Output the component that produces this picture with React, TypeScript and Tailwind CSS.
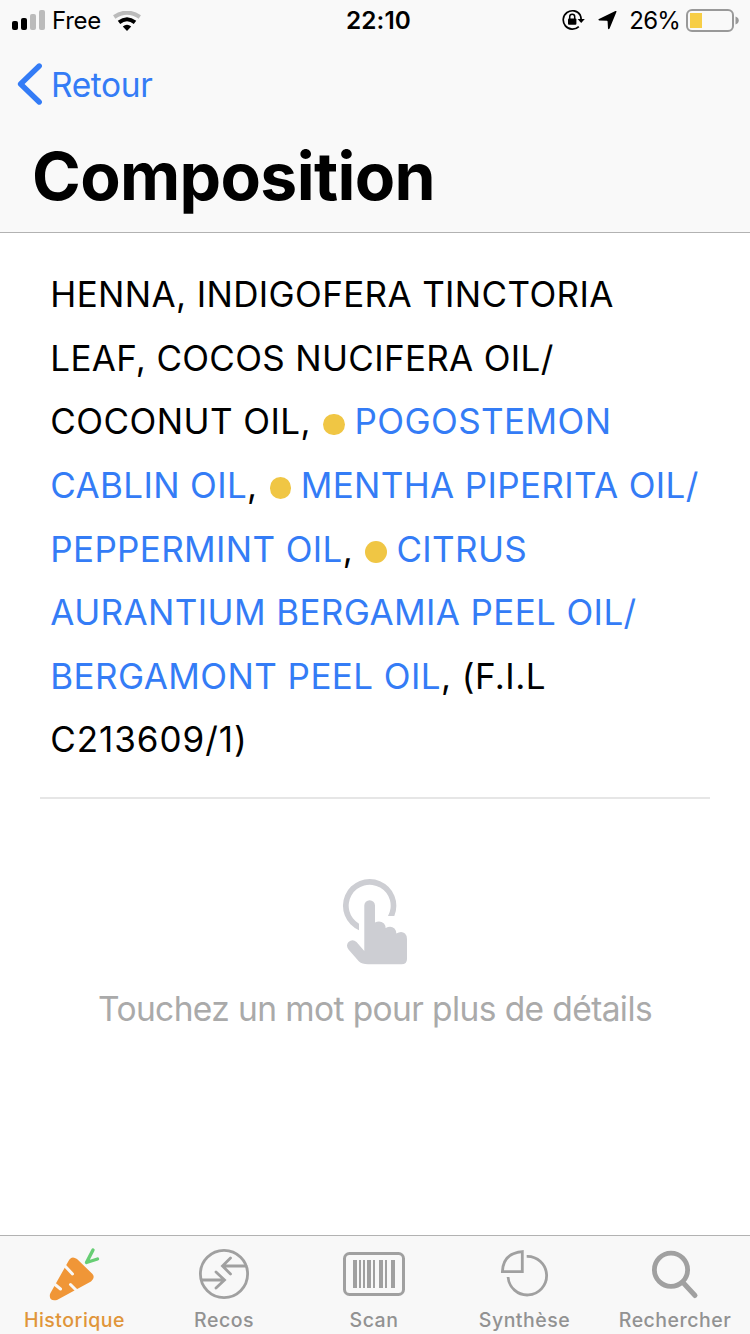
import type { ReactNode } from 'react'

const Dot = () => {
    return <span className="inline-block w-[21.5px] h-[21.5px] rounded-full bg-[#f0c644] align-[-1px] ml-[2px] mr-[9.5px]"></span>
}

const Word = ({ children }: { children: ReactNode }) => {
    return <a href="#" className="text-[#347cf6]">{children}</a>
}

const StatusBar = () => {
    return (
        <div className="flex items-center h-10 pl-3 pr-[11px] text-[24px]">
            <div className="flex flex-1 items-center">
                <svg width="33" height="20" viewBox="0 0 33 20">
                    <rect x="0" y="11" width="6" height="9" rx="2" fill="#000" />
                    <rect x="9" y="8" width="6" height="12" rx="2" fill="#000" />
                    <rect x="18" y="4" width="6" height="16" rx="2" fill="#bbb" />
                    <rect x="27" y="0" width="6" height="20" rx="2" fill="#bbb" />
                </svg>
                <span className="ml-[7px] pt-0.5 tracking-[-0.3px]">Free</span>
                <svg className="ml-3 mt-px" width="28" height="20" viewBox="0 0 28 20" fill="none">
                    <path d="M1.2 6 Q14 -2.8 26.8 6" stroke="#bbb" strokeWidth="4" />
                    <path d="M6 11.4 Q14 5.2 22 11.4" stroke="#000" strokeWidth="4" />
                    <path d="M9.8 15.6 Q14 12 18.2 15.6 L14 20Z" fill="#000" />
                </svg>
            </div>
            <span className="ml-[6px] pt-px font-semibold tracking-[0.1px] text-[24.3px]">22:10</span>
            <div className="flex flex-1 items-center justify-end">
                <svg width="23" height="22" viewBox="0 0 23 22" fill="none">
                    <path d="M18.2 6 A9.2 9.2 0 1 0 16.8 17.6" stroke="#000" strokeWidth="1.7" />
                    <path d="M18 5.6 Q19.2 8 19.2 11" stroke="#000" strokeWidth="1.7" />
                    <path d="M15.6 10 H22.8 L19.2 14Z" fill="#000" />
                    <rect x="6" y="9.4" width="8.4" height="6.4" rx="1" fill="#000" />
                    <path d="M7.7 10 V7.8 A2.5 2.5 0 0 1 12.7 7.8 V10" stroke="#000" strokeWidth="1.5" />
                </svg>
                <svg className="ml-[13px]" width="19" height="20" viewBox="0 0 19 20">
                    <path d="M17.4 1.1 Q19 0.6 18.4 2.1 L11.6 18.4 Q10.5 20 10 18.4 L9.6 11.4 Q9.5 10.7 8.9 10.7 L1.2 10.4 Q-0.5 10 1 8.9Z" fill="#000" />
                </svg>
                <span className="ml-[12px] pt-0.5 tracking-[-0.8px]">26%</span>
                <svg className="ml-[6px] mt-px" width="53" height="23" viewBox="0 0 53 23">
                    <rect x="1" y="1" width="46" height="21" rx="5" fill="none" stroke="#999" strokeWidth="2" />
                    <rect x="4" y="4" width="12" height="15" fill="#f7ce46" />
                    <path d="M49.5 7.5 Q52.8 8.7 52.8 11.5 Q52.8 14.3 49.5 15.5Z" fill="#999" />
                </svg>
            </div>
        </div>
    )
}

const Header = () => {
    return (
        <header className="h-[233px] shrink-0 bg-[#f9f9f9] border-b border-[#b2b2b2]">
            <StatusBar />
            <a href="#" className="flex items-center h-[88px] pl-[17px] text-[#347cf6]">
                <svg width="26" height="42" viewBox="0 0 26 42" fill="none" stroke="currentColor" strokeWidth="5.4" strokeLinecap="round" strokeLinejoin="round">
                    <path d="M22.2 3 L3.6 21 L22.2 39" />
                </svg>
                <span className="ml-2 pt-0.5 text-[33.5px] tracking-[-0.4px]">Retour</span>
            </a>
            <h1 className="pl-8 text-[66px] leading-[96px] font-bold tracking-[-0.65px]">Composition</h1>
        </header>
    )
}

const Ingredients = () => {
    return (
        <section className="mx-10 pl-[10.3px] pt-[30.2px] h-[566px] border-b-2 border-[#e6e6e6] text-[35px] leading-[63.6px] whitespace-nowrap">
            <p className="tracking-[0.36px]">HENNA, INDIGOFERA TINCTORIA</p>
            <p className="tracking-[0.32px]">LEAF, COCOS NUCIFERA OIL/</p>
            <p className="tracking-[0.44px]">COCONUT OIL, <Dot /><Word>POGOSTEMON</Word></p>
            <p className="tracking-[0.35px]"><Word>CABLIN OIL</Word>, <Dot /><Word>MENTHA PIPERITA OIL/</Word></p>
            <p className="tracking-[0.36px]"><Word>PEPPERMINT OIL</Word>, <Dot /><Word>CITRUS</Word></p>
            <p className="tracking-[0.38px]"><Word>AURANTIUM BERGAMIA PEEL OIL/</Word></p>
            <p className="tracking-[0.42px]"><Word>BERGAMONT PEEL OIL</Word>, (F.I.L</p>
            <p className="tracking-[0.95px]">C213609/1)</p>
        </section>
    )
}

const Hint = () => {
    return (
        <div className="flex flex-col flex-1 items-center pt-20">
            <svg width="66" height="86" viewBox="0 0 66 86" fill="#cdced3">
                <path d="M17 51.2 A26.7 26.7 0 1 1 52.3 37 H46 A21 21 0 1 0 17 44.8Z" />
                <path d="M22.3 72 V26.5 A5.3 5.3 0 0 1 33 26.5 V43.5 Q38 41 42 44.5 Q43.6 46.5 43.6 49 Q49 46.5 52.5 49.5 Q54.3 51.5 54.3 54.5 Q59.5 51.5 63 54.5 Q65 56.5 65 60 V80 Q65 85.3 59.5 85.3 H26 Q20 85.3 17 82.5 L6.5 70.5 Q3.5 66.5 6.5 63 Q10.5 59.5 14.5 63Z" />
            </svg>
            <p className="mt-[24px] text-[33.5px] leading-[40px] text-[#aaa] whitespace-nowrap tracking-[-0.6px]">Touchez un mot pour plus de détails</p>
        </div>
    )
}

const TabBar = () => {
    return (
        <nav className="h-[99px] shrink-0 grid grid-cols-[149px_150px_150px_151px_150px] bg-[#f8f8f8] border-t border-[#b2b2b2] text-[#929292] text-[19.5px] font-medium leading-6 tracking-[0.5px]">
            <a href="#" className="flex flex-col items-center text-[#e0953a]">
                <svg className="mt-[11px] mb-[7px]" width="52" height="54" viewBox="0 0 52 54">
                    <path d="M19.5 14 Q22.5 8 28 12 L43.5 27 Q46.5 31 42 34.5 L8 53 Q1 54.5 0.8 49 Q0.7 47.5 1.5 46Z" fill="#f09637" />
                    <path d="M16 19 L23.5 27 M6 37.5 L11.5 42 M21.5 37.5 L28.5 44.5" stroke="#f8f8f8" strokeWidth="3" strokeLinecap="round" />
                    <path d="M44 3 L37.5 15.5 L48.5 12" fill="none" stroke="#67ce74" strokeWidth="3.4" strokeLinecap="round" strokeLinejoin="round" />
                </svg>
                <span>Historique</span>
            </a>
            <a href="#" className="flex flex-col items-center">
                <svg className="mt-3 mb-2" width="52" height="52" viewBox="0 0 52 52" fill="none" stroke="#a0a0a0" strokeWidth="2.8">
                    <circle cx="26" cy="26" r="23.6" />
                    <path d="M48 18 H25 M32.5 10 L24.5 18 L32.5 26 M4 32 H26 M18 24 L26.5 32 L18 40" strokeLinecap="round" />
                </svg>
                <span>Recos</span>
            </a>
            <a href="#" className="flex flex-col items-center">
                <svg className="mt-4 mb-3" width="62" height="44" viewBox="0 0 62 44" fill="#a0a0a0">
                    <rect x="1.5" y="1.5" width="59" height="41" rx="5" fill="none" stroke="#a0a0a0" strokeWidth="3" />
                    <path d="M10 8h4v28h-4z M16 8h2v28h-2z M20 8h2v28h-2z M24 8h4v28h-4z M30 8h2v28h-2z M36 8h4v28h-4z M42 8h2v28h-2z M48 8h4v28h-4z" />
                </svg>
                <span>Scan</span>
            </a>
            <a href="#" className="flex flex-col items-center">
                <svg className="mt-3 mb-2" width="52" height="52" viewBox="0 0 52 52" fill="none" stroke="#a0a0a0" strokeWidth="2.8">
                    <path d="M23.3 3.6 V23.6 H3.4 Q4.2 5.2 23.3 3.6Z" />
                    <path d="M27.7 8.4 A19.3 19.3 0 1 1 9.05 29" />
                </svg>
                <span>Synthèse</span>
            </a>
            <a href="#" className="flex flex-col items-center">
                <svg className="mt-3 mb-2" width="48" height="52" viewBox="0 0 48 52" fill="none" stroke="#a0a0a0">
                    <circle cx="20" cy="21.8" r="16.6" strokeWidth="4.8" />
                    <path d="M32 34.5 L44 47.5" strokeWidth="5" strokeLinecap="round" />
                </svg>
                <span>Rechercher</span>
            </a>
        </nav>
    )
}

const App = () => {
    return (
        <div className="flex flex-col w-[750px] h-[1334px] overflow-hidden bg-white text-black font-['Inter','Liberation_Sans',sans-serif]">
            <Header />
            <main className="flex flex-col flex-1">
                <Ingredients />
                <Hint />
            </main>
            <TabBar />
        </div>
    )
}

export default App
